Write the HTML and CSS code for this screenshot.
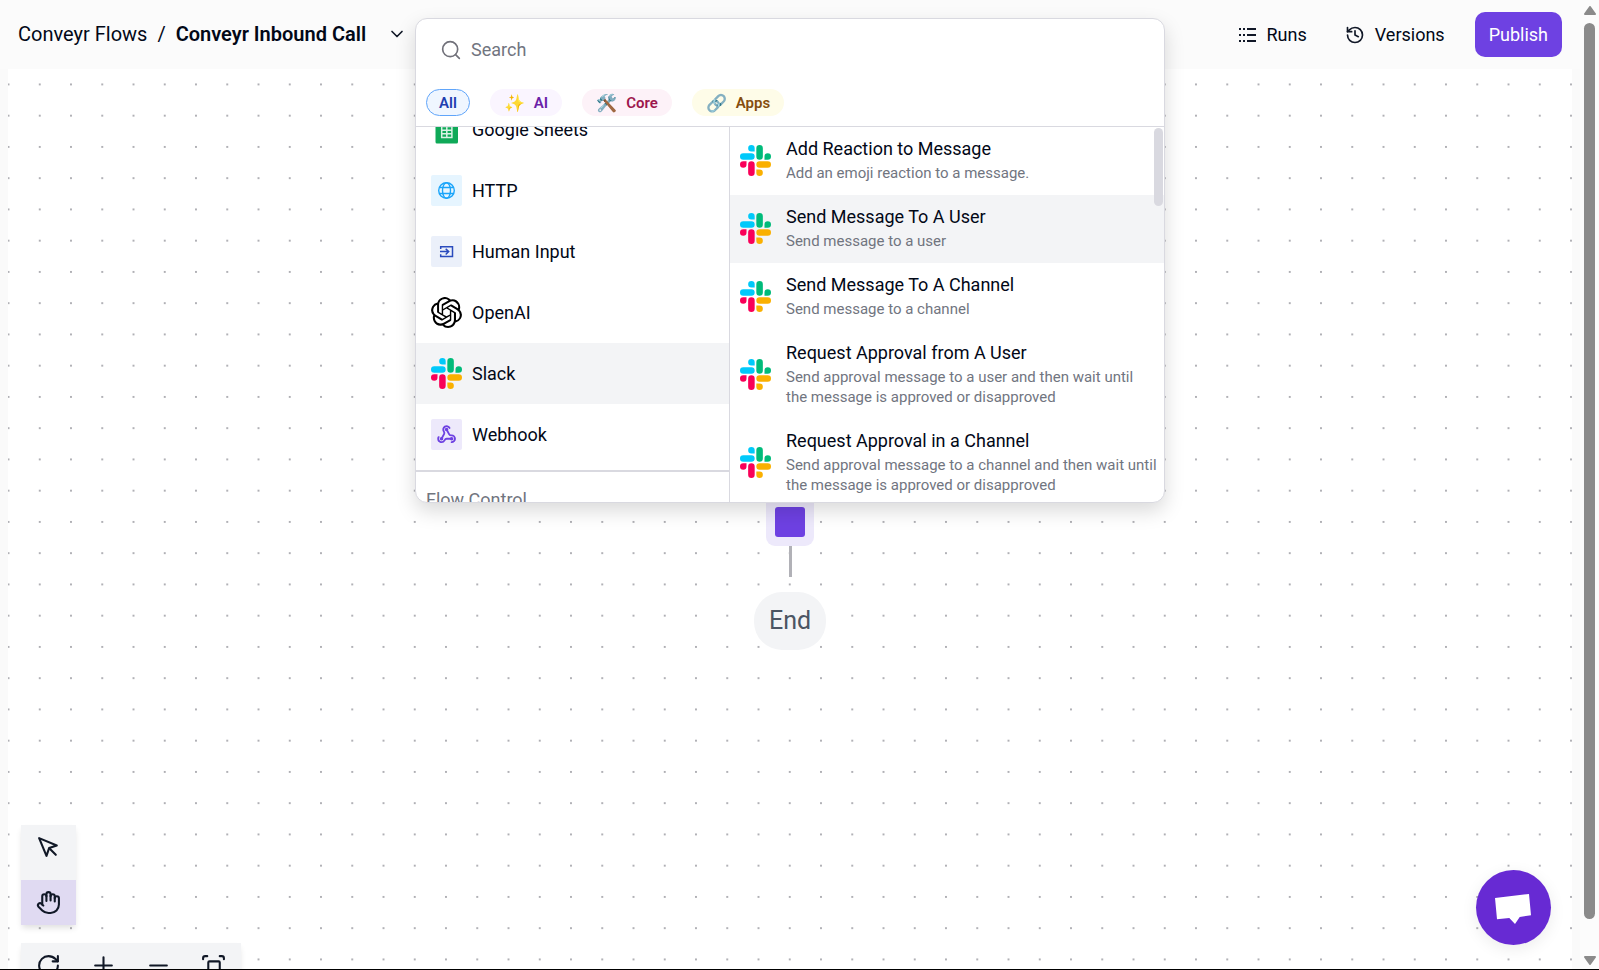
FILE: index.html
```html
<!DOCTYPE html>
<html lang="en">

<head>
    <meta charset="UTF-8">
    <meta name="viewport" content="width=device-width, initial-scale=1.0">
    <title>Conveyr Inbound Call</title>
    <link rel="stylesheet" href="styles.css">
</head>

<body>
    <!-- shared logo, reused by every Slack row -->
    <svg class="sprite" aria-hidden="true">
        <symbol id="slack" viewBox="0 0 24 24">
            <path fill="#f90058" d="M5.042 15.165a2.528 2.528 0 0 1-2.52 2.523A2.528 2.528 0 0 1 0 15.165a2.527 2.527 0 0 1 2.522-2.52h2.52v2.52zM6.313 15.165a2.527 2.527 0 0 1 2.521-2.52 2.527 2.527 0 0 1 2.521 2.52v6.313A2.528 2.528 0 0 1 8.834 24a2.528 2.528 0 0 1-2.521-2.522v-6.313z" />
            <path fill="#00c9fa" d="M8.834 5.042a2.528 2.528 0 0 1-2.521-2.52A2.528 2.528 0 0 1 8.834 0a2.528 2.528 0 0 1 2.521 2.522v2.52H8.834zM8.834 6.313a2.528 2.528 0 0 1 2.521 2.521 2.528 2.528 0 0 1-2.521 2.521H2.522A2.528 2.528 0 0 1 0 8.834a2.528 2.528 0 0 1 2.522-2.521h6.312z" />
            <path fill="#00bb7a" d="M18.956 8.834a2.528 2.528 0 0 1 2.522-2.521A2.528 2.528 0 0 1 24 8.834a2.528 2.528 0 0 1-2.522 2.521h-2.522V8.834zM17.688 8.834a2.528 2.528 0 0 1-2.523 2.521 2.527 2.527 0 0 1-2.52-2.521V2.522A2.527 2.527 0 0 1 15.165 0a2.528 2.528 0 0 1 2.523 2.522v6.312z" />
            <path fill="#fab000" d="M15.165 18.956a2.528 2.528 0 0 1 2.523 2.522A2.528 2.528 0 0 1 15.165 24a2.527 2.527 0 0 1-2.52-2.522v-2.522h2.52zM15.165 17.688a2.527 2.527 0 0 1-2.52-2.523 2.526 2.526 0 0 1 2.52-2.52h6.313A2.527 2.527 0 0 1 24 15.165a2.528 2.528 0 0 1-2.522 2.523h-6.313z" />
        </symbol>
    </svg>

    <div class="app">
        <header class="topbar">
            <nav class="breadcrumb">
                <a href="#">Conveyr Flows</a>
                <span>/</span>
                <strong>Conveyr Inbound Call</strong>
                <button class="icon-button" aria-label="Flow actions">
                    <svg class="icon" width="20" height="20" viewBox="0 0 24 24"><path d="m6 9 6 6 6-6" /></svg>
                </button>
            </nav>
            <div class="actions">
                <button class="link-button">
                    <svg width="20" height="20" viewBox="0 0 20 20" fill="#111827"><path d="M2 3h2v2H2zM6 3h2v2H6zM10 3h9v2h-9zM2 9h2v2H2zM6 9h2v2H6zM10 9h9v2h-9zM2 15h2v2H2zM6 15h2v2H6zM10 15h9v2h-9z" /></svg>
                    Runs
                </button>
                <button class="link-button">
                    <svg class="icon" width="20" height="20" viewBox="0 0 24 24"><path d="M3 12a9 9 0 1 0 9-9 9.75 9.75 0 0 0-6.74 2.74L3 8" /><path d="M3 3v5h5" /><path d="M12 7v5l4 2" /></svg>
                    Versions
                </button>
                <button class="publish">Publish</button>
            </div>
        </header>

        <main class="canvas">
            <svg class="dots" aria-hidden="true">
                <pattern id="grid" width="20" height="20" patternUnits="userSpaceOnUse" patternTransform="translate(-15.1 -.2) scale(1.5625)">
                    <circle cx="10" cy="10" r=".6" fill="#919198" />
                </pattern>
                <rect width="100%" height="100%" fill="url(#grid)" />
            </svg>
            <div class="flow">
                <div class="step"><div class="step-core"></div></div>
                <div class="edge"></div>
                <div class="end">End</div>
            </div>
            <div class="toolbox">
                <button aria-label="Select">
                    <svg class="icon" width="25" height="25" viewBox="0 0 24 24"><path d="m3 3 7.07 16.97 2.51-7.39 7.39-2.51L3 3z" /><path d="m13 13 6 6" /></svg>
                </button>
                <button class="active" aria-label="Pan">
                    <svg class="icon" width="25" height="25" viewBox="0 0 24 24"><path d="M18 11V6a2 2 0 0 0-4 0" /><path d="M14 10V4a2 2 0 0 0-4 0v2" /><path d="M10 10.5V6a2 2 0 0 0-4 0v8" /><path d="M18 8a2 2 0 1 1 4 0v6a8 8 0 0 1-8 8h-2c-2.8 0-4.5-.86-5.99-2.34l-3.6-3.6a2 2 0 0 1 2.83-2.82L7 15" /></svg>
                </button>
            </div>
            <div class="zoombar">
                <button aria-label="Reset zoom">
                    <svg class="icon" width="25" height="25" viewBox="0 0 24 24"><path d="M21 12a9 9 0 1 1-9-9c2.52 0 4.93 1 6.74 2.74L21 8" /><path d="M21 3v5h-5" /></svg>
                </button>
                <button aria-label="Zoom in">
                    <svg class="icon" width="25" height="25" viewBox="0 0 24 24"><path d="M4 12h16M12 4v16" /></svg>
                </button>
                <button aria-label="Zoom out">
                    <svg class="icon" width="25" height="25" viewBox="0 0 24 24"><path d="M4 12h16" /></svg>
                </button>
                <button aria-label="Fit to view">
                    <svg class="icon" width="25" height="25" viewBox="0 0 24 24"><path d="M2 6V5a2 2 0 0 1 2-2h2M18 3h2a2 2 0 0 1 2 2v1M22 18v1a2 2 0 0 1-2 2h-2M6 21H4a2 2 0 0 1-2-2v-1" /><rect x="7" y="8" width="11" height="10" rx="1" /></svg>
                </button>
            </div>
            <button class="chat" aria-label="Open chat">
                <svg width="36" height="30" viewBox="0 0 36 30" fill="#fff"><path d="M0 4 34 0 36 21.3 24.7 23 20 30 14.3 24 2 25.3z" /></svg>
            </button>
        </main>

        <section class="picker">
            <label class="search">
                <svg class="icon" width="20" height="20" viewBox="0 0 24 24"><circle cx="11" cy="11" r="9" /><path d="m22 22-4.5-4.5" /></svg>
                <input type="text" placeholder="Search" aria-label="Search">
            </label>
            <div class="tags">
                <button class="tag tag-all">All</button>
                <button class="tag tag-ai"><span class="emoji">✨</span>AI</button>
                <button class="tag tag-core"><span class="emoji">🛠️</span>Core</button>
                <button class="tag tag-apps"><span class="emoji">🔗</span>Apps</button>
            </div>
            <div class="panes">
                <div class="pieces">
                    <ul class="piece-list">
                        <li class="piece">
                            <svg width="31" height="31" viewBox="0 0 31 31"><path fill="#0fa958" d="M6 0h14l7 7v21a1.500 1.500 0 0 1-1.500 1.500H6A1.500 1.500 0 0 1 4.500 28V1.500A1.500 1.500 0 0 1 6 0z" /><path fill="none" stroke="#d9f2e4" stroke-width="1.5" d="M10.700 12.500h10.200v11H10.700zM10.700 16.200h10.200M10.700 19.800h10.200M15.800 12.500v11" /></svg>
                            Google Sheets
                        </li>
                        <li class="piece">
                            <svg width="31" height="31" viewBox="0 0 31 31"><rect width="31" height="31" rx="2" fill="#e6f5ff" /><g fill="none" stroke="#1ba5fa" stroke-width="1.4"><circle cx="15.5" cy="15.5" r="7.8" /><ellipse cx="15.5" cy="15.5" rx="4" ry="7.8" /><path d="M8.5 12.5h14M8.5 18.5h14" /></g></svg>
                            HTTP
                        </li>
                        <li class="piece">
                            <svg width="31" height="31" viewBox="0 0 31 31"><rect width="31" height="31" rx="2" fill="#ebf0fa" /><path fill="none" stroke="#2a4bbd" stroke-width="1.5" d="M9.7 13v-2.300h11.800v9.800H9.700V18.200M9 15.600h8M14.700 12.700l3 2.900-3 2.900" /></svg>
                            Human Input
                        </li>
                        <li class="piece">
                            <svg width="31" height="31" viewBox="0 0 24 24"><path d="M22.2819 9.8211a5.9847 5.9847 0 0 0-.5157-4.9108 6.0462 6.0462 0 0 0-6.5098-2.9A6.0651 6.0651 0 0 0 4.9807 4.1818a5.9847 5.9847 0 0 0-3.9977 2.9 6.0462 6.0462 0 0 0 .7427 7.0966 5.98 5.98 0 0 0 .511 4.9107 6.051 6.051 0 0 0 6.5146 2.9001A5.9847 5.9847 0 0 0 13.2599 24a6.0557 6.0557 0 0 0 5.7718-4.2058 5.9894 5.9894 0 0 0 3.9977-2.9001 6.0557 6.0557 0 0 0-.7475-7.0729zm-9.022 12.6081a4.4755 4.4755 0 0 1-2.8764-1.0408l.1419-.0804 4.7783-2.7582a.7948.7948 0 0 0 .3927-.6813v-6.7369l2.02 1.1686a.071.071 0 0 1 .038.052v5.5826a4.504 4.504 0 0 1-4.4945 4.4944zm-9.6607-4.1254a4.4708 4.4708 0 0 1-.5346-3.0137l.142.0852 4.783 2.7582a.7712.7712 0 0 0 .7806 0l5.8428-3.3685v2.3324a.0804.0804 0 0 1-.0332.0615L9.74 19.9502a4.4992 4.4992 0 0 1-6.1408-1.6464zM2.3408 7.8956a4.485 4.485 0 0 1 2.3655-1.9728V11.6a.7664.7664 0 0 0 .3879.6765l5.8144 3.3543-2.0201 1.1685a.0757.0757 0 0 1-.071 0l-4.8303-2.7865A4.504 4.504 0 0 1 2.3408 7.872zm16.5963 3.8558L13.1038 8.364 15.1192 7.2a.0757.0757 0 0 1 .071 0l4.8303 2.7913a4.4944 4.4944 0 0 1-.6765 8.1042v-5.6772a.79.79 0 0 0-.407-.667zm2.0107-3.0231l-.142-.0852-4.7735-2.7818a.7759.7759 0 0 0-.7854 0L9.409 9.2297V6.8974a.0662.0662 0 0 1 .0284-.0615l4.8303-2.7866a4.4992 4.4992 0 0 1 6.6802 4.66zM8.3065 12.863l-2.02-1.1638a.0804.0804 0 0 1-.038-.0567V6.0742a4.4992 4.4992 0 0 1 7.3757-3.4537l-.142.0805L8.704 5.459a.7948.7948 0 0 0-.3927.6813zm1.0976-2.3654l2.602-1.4998 2.6069 1.4998v2.9994l-2.5974 1.4997-2.6067-1.4997Z" /></svg>
                            OpenAI
                        </li>
                        <li class="piece selected">
                            <svg width="31" height="31"><use href="#slack" /></svg>
                            Slack
                        </li>
                        <li class="piece">
                            <svg width="31" height="31" viewBox="0 0 31 31"><rect width="31" height="31" rx="2" fill="#ede9fb" /><g transform="translate(5.5 5.5) scale(.84)" fill="none" stroke="#6e41e2" stroke-width="2.2" stroke-linecap="round" stroke-linejoin="round"><path d="M18 16.98h-5.99c-1.1 0-1.95.94-2.48 1.9A4 4 0 0 1 2 17c.01-.7.2-1.4.57-2" /><path d="m6 17 3.13-5.78c.53-.97.1-2.18-.5-3.1a4 4 0 1 1 6.89-4.06" /><path d="m12 6 3.13 5.73C15.66 12.7 16.9 13 18 13a4 4 0 0 1 0 8" /><circle cx="12" cy="6" r="1" /><circle cx="6" cy="17" r="1" /><circle cx="18" cy="17" r="1" /></g></svg>
                            Webhook
                        </li>
                    </ul>
                    <h3 class="group-title">Flow Control</h3>
                </div>
                <ul class="action-list">
                    <li class="action">
                        <svg width="31" height="31"><use href="#slack" /></svg>
                        <div>
                            <h4>Add Reaction to Message</h4>
                            <p>Add an emoji reaction to a message.</p>
                        </div>
                    </li>
                    <li class="action selected">
                        <svg width="31" height="31"><use href="#slack" /></svg>
                        <div>
                            <h4>Send Message To A User</h4>
                            <p>Send message to a user</p>
                        </div>
                    </li>
                    <li class="action">
                        <svg width="31" height="31"><use href="#slack" /></svg>
                        <div>
                            <h4>Send Message To A Channel</h4>
                            <p>Send message to a channel</p>
                        </div>
                    </li>
                    <li class="action">
                        <svg width="31" height="31"><use href="#slack" /></svg>
                        <div>
                            <h4>Request Approval from A User</h4>
                            <p>Send approval message to a user and then wait until the message is approved or disapproved</p>
                        </div>
                    </li>
                    <li class="action">
                        <svg width="31" height="31"><use href="#slack" /></svg>
                        <div>
                            <h4>Request Approval in a Channel</h4>
                            <p>Send approval message to a channel and then wait until the message is approved or disapproved</p>
                        </div>
                    </li>
                </ul>
                <div class="pane-thumb"></div>
            </div>
        </section>
    </div>

    <div class="scrollbar">
        <svg width="14" height="10" viewBox="0 0 14 10"><path d="M7 1l5 7H2z" /></svg>
        <div class="thumb"></div>
        <svg width="14" height="10" viewBox="0 0 14 10"><path d="M7 9l5-7H2z" /></svg>
    </div>
</body>

</html>
```

FILE: styles.css
```css
* {
    box-sizing: border-box;
}

body {
    margin: 0;
    height: 100vh;
    display: flex;
    overflow: hidden;
    border-bottom: 1px solid #000;
    background: #fafafa;
    color: #020817;
    font-family: Roboto, "Liberation Sans", sans-serif;
    font-size: 18px;
    line-height: 24px;
}

button {
    border: none;
    padding: 0;
    background: none;
    font: inherit;
    color: inherit;
    cursor: pointer;
}

svg {
    flex-shrink: 0;
}

ul,
h3,
h4,
p {
    margin: 0;
    padding: 0;
    font-weight: 400;
    list-style: none;
}

.sprite {
    position: absolute;
    width: 0;
    height: 0;
}

.icon {
    fill: none;
    stroke: #111827;
    stroke-width: 2;
    stroke-linecap: round;
    stroke-linejoin: round;
}

.app {
    position: relative;
    flex: 1;
    display: flex;
    flex-direction: column;
}

/* header */
.topbar {
    height: 69px;
    flex-shrink: 0;
    padding: 0 18px;
    display: flex;
    align-items: center;
    justify-content: space-between;
    background: #fbfbfb;
}

.breadcrumb {
    display: flex;
    align-items: center;
    gap: 10px;
    padding-bottom: 2px;
    font-size: 20px;
}

.breadcrumb a {
    color: inherit;
    text-decoration: none;
}

.breadcrumb strong {
    font-weight: 600;
}

.icon-button {
    display: flex;
    margin-left: 11px;
}

.actions {
    display: flex;
    align-items: center;
    gap: 30px;
}

.link-button {
    display: flex;
    align-items: center;
    gap: 10px;
}

.link-button:first-child {
    margin-right: 8px;
}

.publish {
    height: 45px;
    padding: 0 14px;
    border-radius: 10px;
    background: #6e41e2;
    color: #fff;
}

/* flow canvas */
.canvas {
    position: relative;
    flex: 1;
    margin: 0 8px;
    background: #fff;
    overflow: hidden;
}

.dots {
    position: absolute;
    width: 100%;
    height: 100%;
}

.flow {
    position: absolute;
    top: 418px;
    left: 0;
    right: 0;
    display: flex;
    flex-direction: column;
    align-items: center;
}

.step {
    padding: 20px 9px 9px;
    border-radius: 9px;
    background: #ede9fb;
}

.step-core {
    width: 30px;
    height: 30px;
    border-radius: 3px;
    background: #6e41e2;
}

.edge {
    width: 3px;
    height: 31px;
    margin-bottom: 15px;
    background: #b1b1b7;
}

.end {
    padding: 14px 15px;
    border-radius: 28px;
    background: #f3f4f6;
    color: #4b5563;
    font-size: 25px;
    line-height: 30px;
}

.toolbox,
.zoombar {
    position: absolute;
    left: 13px;
    display: flex;
    background: #f3f4f6;
    box-shadow: 0 4px 6px -1px rgba(0, 0, 0, 0.12);
}

.toolbox {
    bottom: 44px;
    flex-direction: column;
    gap: 10px;
}

.zoombar {
    bottom: -19px;
}

.toolbox button,
.zoombar button {
    display: flex;
    align-items: center;
    justify-content: center;
    width: 55px;
    height: 45px;
}

.toolbox .active {
    background: #e0daf2;
}

.chat {
    position: absolute;
    right: 21px;
    bottom: 24px;
    width: 75px;
    height: 75px;
    display: flex;
    align-items: center;
    justify-content: center;
    padding: 2px 2px 0 0;
    border-radius: 50%;
    background: #672ad3;
    box-shadow: 0 4px 16px rgba(0, 0, 0, 0.08);
}

/* step picker */
.picker {
    position: absolute;
    top: 18px;
    left: 0;
    right: 0;
    width: 750px;
    height: 485px;
    margin: 0 auto;
    display: flex;
    flex-direction: column;
    border: 1px solid #d9d9e0;
    border-radius: 12px;
    background: #fff;
    box-shadow: 0 8px 20px rgba(0, 0, 0, 0.15);
    overflow: hidden;
}

.search {
    display: flex;
    align-items: center;
    gap: 10px;
    height: 61px;
    padding: 0 25px;
}

.search .icon {
    stroke: #71717a;
}

.search input {
    flex: 1;
    border: none;
    outline: none;
    padding: 0;
    background: none;
    font: inherit;
}

.search input::placeholder {
    color: #71757f;
}

.tags {
    display: flex;
    gap: 20px;
    padding: 9px 10px 10px;
    border-bottom: 1px solid #d9d9e0;
}

.tag {
    display: flex;
    align-items: center;
    gap: 9px;
    height: 27px;
    padding: 0 14px;
    border-radius: 14px;
    font-size: 15px;
    font-weight: 600;
}

.emoji {
    font-size: 17px;
    font-weight: 400;
}

.tag-all {
    padding: 0 12px;
    border: 1px solid #60a5fa;
    background: #eff6ff;
    color: #1e40af;
}

.tag-ai {
    background: #faf5ff;
    color: #6b21a8;
}

.tag-core {
    background: #fdf2f8;
    color: #9d174d;
}

.tag-apps {
    background: #fefce8;
    color: #854d0e;
}

.panes {
    position: relative;
    flex: 1;
    min-height: 0;
    display: flex;
}

.pieces {
    width: 314px;
    border-right: 1px solid #d9d9e0;
    overflow: hidden;
}

/* the list starts scrolled past its first row */
.piece-list {
    margin-top: -28px;
    padding-bottom: 5px;
    border-bottom: 2px solid #d9d9e0;
}

.piece {
    display: flex;
    align-items: center;
    gap: 10px;
    height: 61px;
    padding: 0 15px;
}

.selected {
    background: #f3f4f6;
}

.group-title {
    padding: 16px 10px;
    color: #71757f;
    font-size: 18px;
}

.action-list {
    flex: 1;
}

.action {
    display: flex;
    align-items: center;
    gap: 15px;
    padding: 10px 7px 12px 10px;
}

.action h4 {
    margin-bottom: 2px;
    font-size: 18px;
}

.action p {
    color: #71757f;
    font-size: 15px;
    line-height: 20px;
}

.pane-thumb {
    position: absolute;
    top: 1px;
    right: 1px;
    width: 9px;
    height: 78px;
    border-radius: 5px;
    background: #d9d9e0;
}

/* page scrollbar */
.scrollbar {
    width: 19px;
    padding: 6px 3px 4px;
    display: flex;
    flex-direction: column;
    align-items: center;
    gap: 7px;
    background: #fcfcfc;
}

.scrollbar path {
    fill: #8b8b8b;
    stroke: #8b8b8b;
    stroke-width: 2;
    stroke-linejoin: round;
}

.thumb {
    flex: 1;
    width: 11px;
    margin-bottom: 29px;
    border-radius: 6px;
    background: #8b8b8b;
}
```
